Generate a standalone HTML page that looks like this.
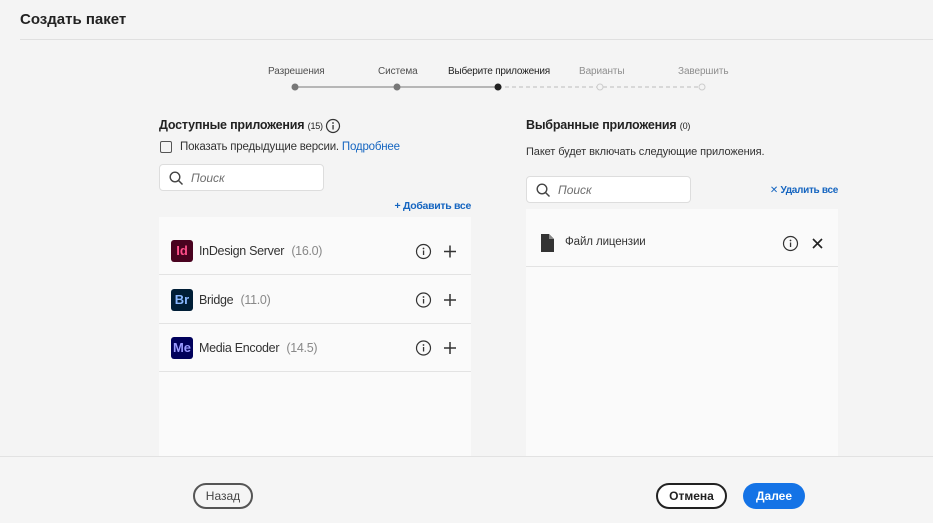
<!DOCTYPE html>
<html><head><meta charset="utf-8"><style>
*{margin:0;padding:0;box-sizing:border-box}
body{width:933px;height:523px;background:#f4f4f4;font-family:"Liberation Sans","DejaVu Sans",sans-serif;color:#2c2c2c;position:relative;overflow:hidden}
.a{position:absolute;white-space:nowrap}
.panel{position:absolute;background:#fafafa}
.row{position:absolute;left:0;right:0;height:49px;border-bottom:1px solid #e3e3e3}
.search{position:absolute;background:#fff;border:1px solid #ddd;border-radius:4px;height:27px}
.search span{position:absolute;left:31px;top:6px;font-size:12px;font-style:italic;color:#6e6e6e}
.icon{position:absolute;width:22px;height:22px;border-radius:3px;color:#fff;font-weight:bold;font-size:13px;text-align:center;line-height:22px}
.btn{position:absolute;height:26px;border-radius:13px;font-size:12px;text-align:center;line-height:22px}
.it{font-size:12.5px;color:#333;letter-spacing:-0.3px}
</style></head><body>
<div class="a" style="left:20px;top:11px;font-size:15px;font-weight:bold;color:#222">Создать пакет</div>
<div class="a" style="left:20px;top:39px;width:913px;height:1px;background:#e0e0e0"></div>

<div class="a" style="left:268px;top:66px;font-size:10px;color:#505050;letter-spacing:-0.1px">Разрешения</div>
<div class="a" style="left:378px;top:66px;font-size:10px;color:#505050;letter-spacing:-0.1px">Система</div>
<div class="a" style="left:448px;top:66px;font-size:10px;color:#222;letter-spacing:-0.2px">Выберите приложения</div>
<div class="a" style="left:579px;top:66px;font-size:10px;color:#8e8e8e;letter-spacing:-0.1px">Варианты</div>
<div class="a" style="left:678px;top:66px;font-size:10px;color:#8e8e8e;letter-spacing:-0.1px">Завершить</div>
<svg class="a" style="left:280px;top:80px" width="440" height="14">
<line x1="15" y1="7" x2="117" y2="7" stroke="#777" stroke-width="1"/>
<line x1="117" y1="7" x2="218" y2="7" stroke="#777" stroke-width="1"/>
<line x1="218" y1="7" x2="422" y2="7" stroke="#bbb" stroke-width="1" stroke-dasharray="4 3"/>
<circle cx="15" cy="7" r="3.5" fill="#777"/>
<circle cx="117" cy="7" r="3.5" fill="#777"/>
<circle cx="218" cy="7" r="3.5" fill="#222"/>
<circle cx="320" cy="7" r="3" fill="#f4f4f4" stroke="#ccc"/>
<circle cx="422" cy="7" r="3" fill="#f4f4f4" stroke="#ccc"/>
</svg>

<div class="a" style="left:159px;top:118px;font-size:12.5px;font-weight:bold;color:#222;letter-spacing:-0.2px">Доступные приложения <span style="font-weight:normal;font-size:9px">(15)</span></div>
<svg class="a" style="left:325px;top:118px" width="16" height="16"><circle cx="8" cy="8" r="6.5" fill="none" stroke="#333" stroke-width="1.2"/><rect x="7.4" y="7" width="1.3" height="4.5" fill="#333"/><circle cx="8" cy="5" r="0.9" fill="#333"/></svg>
<div class="a" style="left:160px;top:141px;width:12px;height:12px;border:1.5px solid #555;border-radius:2px"></div>
<div class="a" style="left:180px;top:141px;font-size:11.5px;color:#333;letter-spacing:-0.2px">Показать предыдущие версии. <span style="color:#1565c0">Подробнее</span></div>
<div class="search" style="left:159px;top:164px;width:165px"><svg class="a" style="left:9px;top:6px" width="15" height="15"><circle cx="6" cy="6" r="4.8" fill="none" stroke="#444" stroke-width="1.4"/><line x1="9.5" y1="9.5" x2="13.5" y2="13.5" stroke="#444" stroke-width="1.5"/></svg><span>Поиск</span></div>
<div class="a" style="right:462px;top:200px;font-size:10.5px;color:#1565c0;letter-spacing:-0.3px;font-weight:bold">+ Добавить все</div>

<div class="panel" style="left:159px;top:217px;width:312px;height:240px">
<div class="row" style="top:9px"></div><div class="row" style="top:58px"></div><div class="row" style="top:106px"></div>
</div>
<div class="icon" style="left:171px;top:240px;background:#49021f;color:#ff4f8a">Id</div>
<div class="a it" style="left:199px;top:244px">InDesign Server <span style="color:#888;margin-left:4px">(16.0)</span></div>
<div class="icon" style="left:171px;top:289px;background:#001e36;color:#8ab8ff">Br</div>
<div class="a it" style="left:199px;top:293px">Bridge <span style="color:#888;margin-left:4px">(11.0)</span></div>
<div class="icon" style="left:171px;top:337px;background:#00005b;color:#9999ff">Me</div>
<div class="a it" style="left:199px;top:341px">Media Encoder <span style="color:#888;margin-left:4px">(14.5)</span></div>

<svg class="a" style="left:414px;top:242px" width="50" height="120">
<g fill="none" stroke="#333" stroke-width="1.2">
<circle cx="9.5" cy="9.5" r="7"/><circle cx="9.5" cy="58" r="7"/><circle cx="9.5" cy="106" r="7"/>
<path d="M36 3.5v12M30 9.5h12M36 52v12M30 58h12M36 100v12M30 106h12" stroke-width="1.5"/>
</g>
<g fill="#333"><rect x="8.9" y="8.5" width="1.3" height="4.5"/><circle cx="9.5" cy="6.5" r="0.9"/>
<rect x="8.9" y="57" width="1.3" height="4.5"/><circle cx="9.5" cy="55" r="0.9"/>
<rect x="8.9" y="105" width="1.3" height="4.5"/><circle cx="9.5" cy="103" r="0.9"/></g>
</svg>

<div class="a" style="left:526px;top:118px;font-size:12.5px;font-weight:bold;color:#222;letter-spacing:-0.2px">Выбранные приложения <span style="font-weight:normal;font-size:9px">(0)</span></div>
<div class="a" style="left:526px;top:146px;font-size:11px;color:#333;letter-spacing:-0.1px">Пакет будет включать следующие приложения.</div>
<div class="search" style="left:526px;top:176px;width:165px"><svg class="a" style="left:9px;top:6px" width="15" height="15"><circle cx="6" cy="6" r="4.8" fill="none" stroke="#444" stroke-width="1.4"/><line x1="9.5" y1="9.5" x2="13.5" y2="13.5" stroke="#444" stroke-width="1.5"/></svg><span>Поиск</span></div>
<div class="a" style="right:95px;top:185px;font-size:10px;color:#1565c0;letter-spacing:-0.3px;font-weight:bold">✕ Удалить все</div>
<div class="panel" style="left:526px;top:209px;width:312px;height:248px">
<div class="row" style="top:9px;height:49px"></div>
</div>
<svg class="a" style="left:541px;top:234px" width="14" height="18"><path d="M0 0h8l5 5v13H0z" fill="#333"/><path d="M8 0v5h5" fill="#888"/></svg>
<div class="a" style="left:565px;top:236px;font-size:11.5px;color:#333;letter-spacing:-0.1px">Файл лицензии</div>
<svg class="a" style="left:781px;top:234px" width="50" height="20">
<circle cx="9.5" cy="9.5" r="7" fill="none" stroke="#333" stroke-width="1.2"/><rect x="8.9" y="8.5" width="1.3" height="4.5" fill="#333"/><circle cx="9.5" cy="6.5" r="0.9" fill="#333"/>
<path d="M32 5l9 9M41 5l-9 9" stroke="#222" stroke-width="1.6"/>
</svg>

<div class="a" style="left:0;top:456px;width:933px;height:67px;background:#f5f5f5;border-top:1px solid #e2e2e2"></div>
<div class="btn" style="left:193px;top:483px;width:60px;border:2px solid #555;color:#444">Назад</div>
<div class="btn" style="left:656px;top:483px;width:71px;border:2px solid #222;color:#222;background:#fff;font-weight:bold">Отмена</div>
<div class="btn" style="left:743px;top:483px;width:62px;background:#1473e6;color:#fff;line-height:26px;font-weight:bold">Далее</div>
</body></html>
